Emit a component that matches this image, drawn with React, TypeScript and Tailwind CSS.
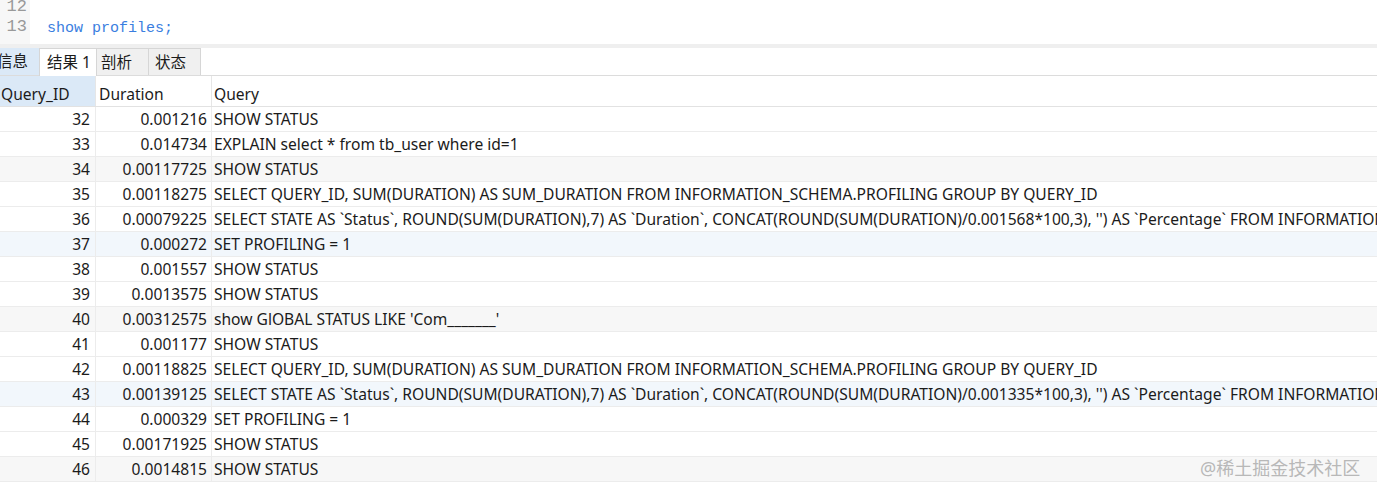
const rows: [number, string, string, string][] = [
  [32, '0.001216', 'SHOW STATUS', 'w'],
  [33, '0.014734', 'EXPLAIN select * from tb_user where id=1', 'w'],
  [34, '0.00117725', 'SHOW STATUS', 'g'],
  [35, '0.00118275', 'SELECT QUERY_ID, SUM(DURATION) AS SUM_DURATION FROM INFORMATION_SCHEMA.PROFILING GROUP BY QUERY_ID', 'w'],
  [36, '0.00079225', "SELECT STATE AS `Status`, ROUND(SUM(DURATION),7) AS `Duration`, CONCAT(ROUND(SUM(DURATION)/0.001568*100,3), '') AS `Percentage` FROM INFORMATION_SCHEMA.PROFILING WHERE QUERY_ID=36 GROUP BY SEQ, STATE ORDER BY SEQ", 'w'],
  [37, '0.000272', 'SET PROFILING = 1', 'b'],
  [38, '0.001557', 'SHOW STATUS', 'w'],
  [39, '0.0013575', 'SHOW STATUS', 'w'],
  [40, '0.00312575', "show GlOBAL STATUS LIKE 'Com_______'", 'g'],
  [41, '0.001177', 'SHOW STATUS', 'w'],
  [42, '0.00118825', 'SELECT QUERY_ID, SUM(DURATION) AS SUM_DURATION FROM INFORMATION_SCHEMA.PROFILING GROUP BY QUERY_ID', 'w'],
  [43, '0.00139125', "SELECT STATE AS `Status`, ROUND(SUM(DURATION),7) AS `Duration`, CONCAT(ROUND(SUM(DURATION)/0.001335*100,3), '') AS `Percentage` FROM INFORMATION_SCHEMA.PROFILING WHERE QUERY_ID=42 GROUP BY SEQ, STATE ORDER BY SEQ", 'b'],
  [44, '0.000329', 'SET PROFILING = 1', 'w'],
  [45, '0.00171925', 'SHOW STATUS', 'w'],
  [46, '0.0014815', 'SHOW STATUS', 'g'],
];

const rowBg: Record<string, string> = {
  w: 'bg-white',
  g: 'bg-[#f7f7f7]',
  b: 'bg-[#f2f7fc]',
};

export default function App() {
  return (
    <div
      className="relative w-[1377px] h-[495px] overflow-hidden bg-white text-[#1b1b1b]"
      style={{ fontFamily: '"Noto Sans", "Noto Sans CJK SC", sans-serif' }}
    >
      {/* Editor */}
      <div className="flex h-[44px] overflow-hidden">
        <div className="w-[30px] bg-[#f7f7f7] pr-[3px] text-right text-[17px] leading-[20px] text-[#999999] font-['Liberation_Mono',monospace]">
          <div className="-mt-[3px]">12</div>
          <div>13</div>
        </div>
        <div className="pl-[17px] pt-[19px] text-[15px] leading-[20px] text-[#3a7ee0] font-['Liberation_Mono',monospace]">
          show profiles;
        </div>
      </div>
      <div className="h-[4px] bg-[#efefef]" />

      {/* Tabs */}
      <div className="flex h-[28px] border-b border-[#dcdcdc] text-[15.5px]">
        <div className="-ml-[10px] w-[49px] bg-[#dbe9f7] pl-[7px] leading-[27px]">信息</div>
        <div className="w-[58px] border-x border-t border-[#d6d6d6] bg-white pl-[7px] leading-[26px] -mb-px">结果 1</div>
        <div className="w-[52px] border-r border-t border-[#d6d6d6] bg-[#f0f0f0] pl-[4px] leading-[26px]">剖析</div>
        <div className="w-[52px] border-r border-t border-[#d6d6d6] bg-[#f0f0f0] pl-[6px] leading-[26px]">状态</div>
      </div>

      {/* Grid */}
      <div className="text-[15.6px]">
        <div className="flex h-[31px] border-b border-[#e2e2e2] leading-[36px]">
          <div className="w-[96px] shrink-0 border-r border-[#e6e6e6] bg-[#dbe9f7] pl-[1px]">Query_ID</div>
          <div className="w-[116px] shrink-0 border-r border-[#e6e6e6] pl-[3px]">Duration</div>
          <div className="pl-[2px] whitespace-nowrap">Query</div>
        </div>
        {rows.map(([id, dur, q, bg]) => (
          <div key={id} className={`flex h-[25px] border-b border-[#ececec] leading-[24px] ${rowBg[bg]}`}>
            <div className="w-[96px] shrink-0 border-r border-[#ececec] pr-[5px] text-right">{id}</div>
            <div className="w-[116px] shrink-0 border-r border-[#ececec] pr-[4px] text-right">{dur}</div>
            <div className="pl-[2px] whitespace-nowrap">{q}</div>
          </div>
        ))}
      </div>

      {/* Watermark */}
      <div className="absolute left-[1200px] top-[455px] text-[18px] text-[#b8b8b8]">
        @稀土掘金技术社区
      </div>
    </div>
  );
}
